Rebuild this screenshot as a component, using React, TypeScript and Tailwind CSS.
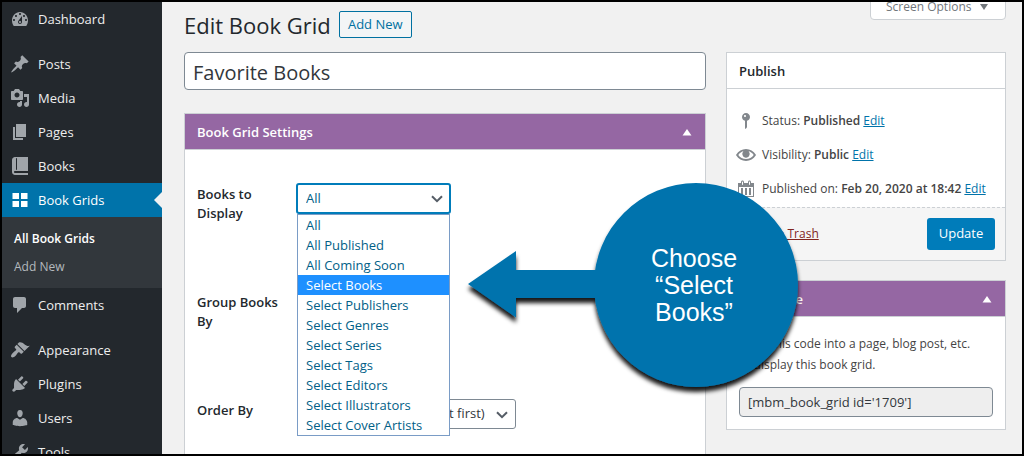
import type { ReactNode } from "react";
import clsx from "clsx";

const ICONS = {
  dashboard:
    "M3.76 17h12.48c1.11-1.51 1.76-3.38 1.76-5.4C18 6.85 14.42 3 10 3S2 6.85 2 11.6c0 2.02.65 3.89 1.76 5.4zM10 4c.55 0 1 .45 1 1s-.45 1-1 1-1-.45-1-1 .45-1 1-1zM6 6c.55 0 1 .45 1 1s-.45 1-1 1-1-.45-1-1 .45-1 1-1zm8 0c.55 0 1 .45 1 1s-.45 1-1 1-1-.45-1-1 .45-1 1-1zm-5.37 5.55L12 7v6c0 1.1-.9 2-2 2s-2-.9-2-2c0-.57.24-1.08.63-1.45zM4 10c.55 0 1 .45 1 1s-.45 1-1 1-1-.45-1-1 .45-1 1-1zm12 0c.55 0 1 .45 1 1s-.45 1-1 1-1-.45-1-1 .45-1 1-1zm-5 3c0-.55-.45-1-1-1s-1 .45-1 1 .45 1 1 1 1-.45 1-1z",
  posts:
    "M10.44 3.02l1.82-1.82 6.36 6.35-1.83 1.82c-1.05-.68-2.48-.57-3.41.36l-.75.75c-.92.93-1.04 2.35-.35 3.41l-1.83 1.82-2.41-2.41-2.8 2.79c-.42.42-3.38 2.71-3.8 2.29s1.86-3.39 2.28-3.81l2.79-2.79L4.1 9.36l1.83-1.82c1.05.69 2.48.57 3.4-.36l.75-.75c.93-.92 1.05-2.35.36-3.41z",
  media:
    "M13 11V4c0-.55-.45-1-1-1h-1.67L9 1H5L3.67 3H2c-.55 0-1 .45-1 1v7c0 .55.45 1 1 1h10c.55 0 1-.45 1-1zM7 4.5c1.38 0 2.5 1.12 2.5 2.5S8.38 9.5 7 9.5 4.5 8.38 4.5 7 5.62 4.5 7 4.5zM14 6h5v10.5c0 1.38-1.12 2.5-2.5 2.5S14 17.88 14 16.5s1.12-2.5 2.5-2.5c.17 0 .34.02.5.05V9h-3V6zm-4 8.05V13h2v3.5c0 1.38-1.12 2.5-2.5 2.5S7 17.88 7 16.5 8.12 14 9.5 14c.17 0 .34.02.5.05z",
  pages: "M6 15V2h10v13H6zm-1 1h8v2H3V5h2v11z",
  books:
    "M5 17h13v2H5c-1.66 0-3-1.34-3-3V4c0-1.66 1.34-3 3-3h13v14H5c-.55 0-1 .45-1 1s.45 1 1 1zm2-3.5v-11c0-.28-.22-.5-.5-.5s-.5.22-.5.5v11c0 .28.22.5.5.5s.5-.22.5-.5z",
  grid: "M2.5 3H9v6H2.500zM11 3h6.500v6H11zM2.500 11H9v6H2.500zM11 11h6.500v6H11z",
  comments:
    "M5 2h9c1.1 0 2 .9 2 2v7c0 1.1-.9 2-2 2h-2l-5 5v-5H5c-1.1 0-2-.9-2-2V4c0-1.1.9-2 2-2z",
  appearance:
    "M14.48 11.06L7.41 3.99l1.5-1.5c.5-.56 2.3-.47 3.51.32 1.21.8 1.43 1.28 2.91 2.1 1.18.64 2.45 1.26 4.45.85zm-.71.71L6.7 4.7 4.93 6.47c-.39.39-.39 1.02 0 1.41l1.06 1.06c.39.39.39 1.03 0 1.42-.6.6-1.43 1.11-2.21 1.69-.35.26-.7.53-1.01.84C1.43 14.23.4 16.08 1.4 17.07c.99 1 2.84-.03 4.18-1.36.31-.31.58-.66.85-1.02.57-.78 1.08-1.61 1.69-2.21.39-.39 1.02-.39 1.41 0l1.06 1.06c.39.39 1.02.39 1.41 0z",
  plugins:
    "M13.11 4.36L9.87 7.6 8 5.73l3.24-3.24c.35-.34 1.05-.2 1.56.32.52.51.66 1.21.31 1.55zm-8 1.77l.91-1.12 9.01 9.01-1.19.84c-.71.71-2.63 1.16-3.82 1.16H6.14L4.9 17.26c-.59.59-1.54.59-2.12 0-.59-.58-.59-1.53 0-2.12l1.24-1.24v-3.88c0-1.13.4-3.19 1.09-3.89zm7.26 3.97l3.24-3.24c.34-.35 1.04-.21 1.55.31.52.51.66 1.21.31 1.55l-3.24 3.25z",
  users:
    "M10 9.25c-2.27 0-2.73-3.44-2.73-3.44C7 4.02 7.82 2 9.97 2c2.16 0 2.98 2.02 2.71 3.81 0 0-.41 3.44-2.68 3.44zm0 2.57L12.72 10c2.39 0 4.52 2.33 4.52 4.53v2.49s-3.65 1.13-7.24 1.13c-3.65 0-7.24-1.13-7.24-1.13v-2.49c0-2.25 1.94-4.48 4.47-4.48z",
  tools:
    "M16.68 9.77c-1.34 1.34-3.3 1.67-4.95.99l-5.41 6.52c-.99.99-2.59.99-3.58 0s-.99-2.59 0-3.57l6.52-5.42c-.68-1.65-.35-3.61.99-4.95 1.28-1.28 3.12-1.62 4.72-1.06l-2.89 2.89 2.82 2.82 2.86-2.87c.53 1.58.18 3.39-1.08 4.65zM3.81 16.21c.4.39 1.04.39 1.43 0 .4-.4.4-1.04 0-1.43-.39-.4-1.03-.4-1.43 0-.39.39-.39 1.03 0 1.43z",
  status:
    "M14 6c0 1.86-1.28 3.41-3 3.86V16c0 1-2 2-2 2V9.860c-1.720-.45-3-2-3-3.860 0-2.210 1.790-4 4-4s4 1.790 4 4zM8 5c0 .55.45 1 1 1s1-.45 1-1-.45-1-1-1-1 .45-1 1z",
  visibility:
    "M19.7 9.4C17.700 6 14 3.900 10 3.900S2.300 6 .3 9.400L0 10l.3.6c2 3.400 5.700 5.500 9.700 5.500s7.700-2.100 9.700-5.500l.3-.6-.3-.6zM10 14.100c-3.100 0-6-1.600-7.700-4.100C3.600 8 5.700 6.600 8 6.100c-.9.6-1.500 1.700-1.500 2.900 0 1.900 1.600 3.500 3.500 3.500s3.500-1.600 3.500-3.500c0-1.200-.6-2.300-1.500-2.900 2.300.5 4.400 1.900 5.700 3.900-1.700 2.500-4.600 4.100-7.700 4.100z",
  calendar:
    "M15 4h3v14H2V4h3V3c0-.83.67-1.5 1.5-1.5S8 2.17 8 3v1h4V3c0-.83.67-1.5 1.5-1.5S15 2.17 15 3v1zM6 3v2.5c0 .28.22.5.5.5s.5-.22.5-.5V3c0-.28-.22-.5-.5-.5S6 2.72 6 3zm7 0v2.500c0 .28.22.5.5.5s.5-.22.5-.5V3c0-.28-.22-.5-.5-.5s-.5.22-.5.5zm4 14V8H3v9h14zM7 16V9H5v7h2zm4 0V9H9v7h2zm4 0V9h-2v7h2z",
};

type IconName = keyof typeof ICONS;

const MENU: { label: string; icon: IconName; gap?: boolean; children?: string[] }[] = [
  { label: "Dashboard", icon: "dashboard" },
  { label: "Posts", icon: "posts", gap: true },
  { label: "Media", icon: "media" },
  { label: "Pages", icon: "pages" },
  { label: "Books", icon: "books" },
  { label: "Book Grids", icon: "grid", children: ["All Book Grids", "Add New"] },
  { label: "Comments", icon: "comments" },
  { label: "Appearance", icon: "appearance", gap: true },
  { label: "Plugins", icon: "plugins" },
  { label: "Users", icon: "users" },
  { label: "Tools", icon: "tools" },
];

const DISPLAY_OPTIONS = [
  "All",
  "All Published",
  "All Coming Soon",
  "Select Books",
  "Select Publishers",
  "Select Genres",
  "Select Series",
  "Select Tags",
  "Select Editors",
  "Select Illustrators",
  "Select Cover Artists",
];

function Icon({ name, className }: { name: IconName; className?: string }) {
  return (
    <svg viewBox="0 0 20 20" fill="currentColor" fillRule="evenodd" className={clsx("size-5 shrink-0", className)}>
      <path d={ICONS[name]} />
      {name === "visibility" && <circle cx="10" cy="9" r="3.4" />}
    </svg>
  );
}

function Sidebar() {
  return (
    <nav className="w-40 shrink-0 bg-[#23282d] text-[13px] text-[#eeeeee]">
      <ul>
        {MENU.map((item) => (
          <li key={item.label} className={clsx(item.gap && "mt-[11px]")}>
            <a
              href="#"
              className={clsx(
                "flex h-[34px] items-center justify-between pl-2",
                item.children && "bg-[#0073aa] text-white",
              )}
            >
              <span className="flex items-center gap-2">
                <Icon name={item.icon} className={item.children ? "text-white" : "text-[#a0a5aa]"} />
                <span className="pt-[2px]">{item.label}</span>
              </span>
              {item.children && (
                <svg viewBox="0 0 8 16" className="h-4 w-2" fill="#f1f1f1">
                  <path d="M8 0v16L0 8z" />
                </svg>
              )}
            </a>
            {item.children && (
              <ul className="bg-[#32373c] pt-2 pb-[7px]">
                {item.children.map((child, i) => (
                  <li key={child}>
                    <a
                      href="#"
                      className={clsx(
                        "flex h-7 items-center pl-3 text-xs",
                        i === 0 ? "font-semibold text-white" : "text-[#b4b9be]",
                      )}
                    >
                      {child}
                    </a>
                  </li>
                ))}
              </ul>
            )}
          </li>
        ))}
      </ul>
    </nav>
  );
}

function Panel({ title, purple, children }: { title: string; purple?: boolean; children: ReactNode }) {
  return (
    <section className="border border-[#ccd0d4] bg-white">
      <header
        className={clsx(
          "flex h-9 items-center justify-between border-b border-[#ccd0d4] px-3",
          purple ? "bg-[#9567a3] text-white" : "text-[#23282d]",
        )}
      >
        <h2 className="pt-[2px] text-[13px] font-semibold">{title}</h2>
        {purple && (
          <button type="button" aria-label="Toggle panel">
            <svg viewBox="0 0 12 8" className="h-2 w-3" fill="currentColor">
              <path d="M6 1l4.500 6.500h-9z" />
            </svg>
          </button>
        )}
      </header>
      {children}
    </section>
  );
}

function Select({
  id,
  options,
  className,
}: {
  id: string;
  options: string[];
  className?: string;
}) {
  return (
    <div className="relative">
      <select
        id={id}
        className={clsx("block appearance-none rounded-[3px] bg-white text-[13px] outline-none", className)}
      >
        {options.map((o) => (
          <option key={o}>{o}</option>
        ))}
      </select>
      <svg
        viewBox="0 0 12 8"
        className="pointer-events-none absolute top-3 right-2 h-2 w-3"
        fill="none"
        stroke="#555d66"
        strokeWidth="2"
      >
        <path d="M1 1.200l5 5 5-5" />
      </svg>
    </div>
  );
}

function Field({ id, label, children }: { id: string; label: string; children: ReactNode }) {
  return (
    <div className="flex h-[108px] items-start">
      <label
        htmlFor={id}
        className="w-[99px] shrink-0 pt-[2px] pr-2 text-[13px] leading-[19px] font-semibold text-[#23282d]"
      >
        {label}
      </label>
      <div className="relative">{children}</div>
    </div>
  );
}

function SettingsPanel() {
  return (
    <Panel title="Book Grid Settings" purple>
      <form className="px-3 pt-[33px]">
        <Field id="display" label="Books to Display">
          <Select
            id="display"
            options={["All"]}
            className="h-[31px] w-[155px] border-2 border-[#007cba] pl-2 text-[#016087]"
          />
          <ul
            role="listbox"
            aria-label="Books to Display"
            className="absolute top-full left-px z-10 w-[153px] border border-[#7a9cc6] bg-white text-[13px] leading-5 text-[#016087]"
          >
            {DISPLAY_OPTIONS.map((o) => (
              <li
                key={o}
                role="option"
                aria-selected={o === "Select Books"}
                className={clsx("pl-2", o === "Select Books" && "bg-[#1e90ff] text-white")}
              >
                {o}
              </li>
            ))}
          </ul>
        </Field>
        <Field id="group" label="Group Books By">
          <div className="pl-1">
            <Select
              id="group"
              options={["None"]}
              className="h-[30px] w-[120px] border border-[#7e8993] pl-1 text-[#32373c]"
            />
          </div>
        </Field>
        <Field id="order" label="Order By">
          <div className="pl-1">
            <Select
              id="order"
              options={["Publication date (newest first)"]}
              className="h-[30px] w-[216px] border border-[#7e8993] pl-1 text-[#32373c]"
            />
          </div>
        </Field>
      </form>
    </Panel>
  );
}

function PublishRow({ icon, label, value }: { icon: IconName; label: string; value: string }) {
  return (
    <div className="flex h-[34px] items-center gap-[6px] pl-[9px]">
      <Icon name={icon} className="text-[#82878c]" />
      <p className="whitespace-nowrap">
        {label}: <b className="font-semibold">{value}</b>{" "}
        <a href="#" className="text-[#0073aa] underline">
          Edit
        </a>
      </p>
    </div>
  );
}

function PublishPanel() {
  return (
    <Panel title="Publish">
      <div className="pt-[15px] pb-px text-xs text-[#444444]">
        <PublishRow icon="status" label="Status" value="Published" />
        <PublishRow icon="visibility" label="Visibility" value="Public" />
        <PublishRow icon="calendar" label="Published on" value="Feb 20, 2020 at 18:42" />
      </div>
      <div className="flex items-center justify-between border-t border-dashed border-[#ccd0d4] bg-[#f5f5f5] px-[10px] py-[10px] text-xs">
        <a href="#" className="pl-[2px] text-[#82251f] underline">
          Move to Trash
        </a>
        <button type="button" className="h-8 w-[68px] rounded-[3px] bg-[#007cba] text-[13px] text-white">
          Update
        </button>
      </div>
    </Panel>
  );
}

function ShortcodePanel() {
  return (
    <Panel title="Shortcode" purple>
      <div className="px-3 pt-4 pb-3 text-xs text-[#444444]">
        <label htmlFor="shortcode" className="block pb-3 leading-[21px]">
          Copy this code into a page, blog post, etc.
          <br />
          to display this book grid.
        </label>
        <input
          id="shortcode"
          readOnly
          value="[mbm_book_grid id='1709']"
          className="h-[30px] w-full rounded border border-[#7e8993] bg-[#eeeeee] px-2 text-[13px] text-[#32373c]"
        />
      </div>
    </Panel>
  );
}

// Annotation bubble that points at the highlighted option
function Callout() {
  return (
    <div className="pointer-events-none absolute top-[177px] left-[462px] z-20 h-[220px] w-[344px]">
      <svg viewBox="0 0 344 220" className="h-full w-full">
        <defs>
          <filter id="shadow" x="-10%" y="-10%" width="120%" height="125%">
            <feDropShadow dx="0" dy="5" stdDeviation="2" floodColor="#000000" floodOpacity="0.9" />
          </filter>
        </defs>
        <path
          d="M4 105L52 72v19h80v28H52v19.500zM232 4a102 102 0 1 1 0 204a102 102 0 1 1 0-204z"
          fill="#0073ad"
          filter="url(#shadow)"
        />
      </svg>
      <p className="absolute inset-y-0 right-4 left-[132px] flex items-center justify-center pb-2 text-center font-['Liberation_Sans',sans-serif] text-[25px] leading-[27px] text-white">
        <span>
          Choose
          <br />
          “Select
          <br />
          Books”
        </span>
      </p>
    </div>
  );
}

export default function App() {
  return (
    <div className="relative flex h-screen overflow-hidden border-2 border-black bg-[#f1f1f1] font-['Open_Sans','Noto_Sans',sans-serif]">
      <Sidebar />
      <main className="flex min-w-0 flex-1 gap-5 pr-4 pl-[22px]">
        <div className="min-w-0 flex-1">
          <div className="flex h-[50px] items-start gap-2 pt-2">
            <h1 className="text-[22px] leading-[30px] whitespace-nowrap text-[#23282d]">Edit Book Grid</h1>
            <a
              href="#"
              className="mt-px flex h-[27px] w-[73px] items-center justify-center rounded-[2px] border border-[#0071a1] bg-[#f3f5f6] text-[13px] text-[#0071a1]"
            >
              Add New
            </a>
          </div>
          <input
            aria-label="Title"
            defaultValue="Favorite Books"
            className="mb-[23px] block h-[38px] w-full rounded border border-[#7e8993] bg-white px-2 pt-[2px] text-xl text-[#32373c]"
          />
          <SettingsPanel />
        </div>
        <div className="w-[280px] shrink-0">
          <div className="flex h-[50px] items-start justify-end">
            <button
              type="button"
              className="-mt-3 flex h-[30px] w-[136px] items-center justify-between rounded-b border border-[#ccd0d4] bg-white pt-[3px] pr-4 pl-[15px] text-xs text-[#72777c]"
            >
              Screen Options
              <svg viewBox="0 0 10 8" className="h-2 w-[10px]" fill="currentColor">
                <path d="M1 1h8L5 7z" />
              </svg>
            </button>
          </div>
          <div className="flex flex-col gap-[19px]">
            <PublishPanel />
            <ShortcodePanel />
          </div>
        </div>
      </main>
      <Callout />
    </div>
  );
}
